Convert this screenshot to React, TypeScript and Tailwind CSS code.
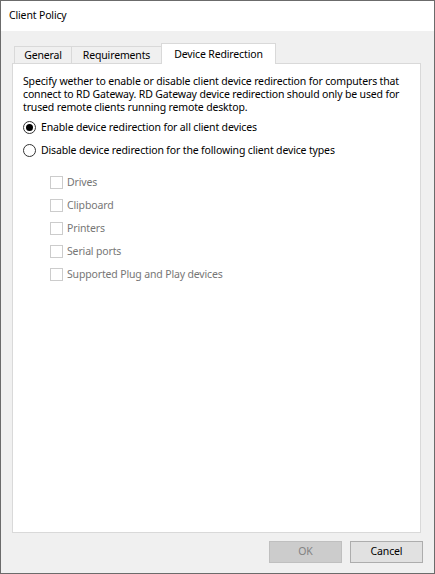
import React from "react";

const font = "font-['Noto_Sans',sans-serif]";

function Radio({ checked, label }: { checked?: boolean; label: string }) {
    return (
        <div className="h-[23px] flex items-center">
            <span className="w-[13px] h-[13px] rounded-full border border-[#333333] bg-white flex items-center justify-center">
                {checked && <span className="w-[7px] h-[7px] rounded-full bg-black" />}
            </span>
            <span className="ml-[5px] whitespace-nowrap">{label}</span>
        </div>
    )
}

function Check({ label }: { label: string }) {
    return (
        <div className="h-[23px] flex items-center">
            <span className="w-[13px] h-[13px] border border-[#cccccc] bg-white" />
            <span className="ml-[4px] whitespace-nowrap text-[#767676]">{label}</span>
        </div>
    )
}

export default function App() {
    const types = ["Drives", "Clipboard", "Printers", "Serial ports", "Supported Plug and Play devices"];

    return (
        <div className={`w-[435px] h-[574px] border border-[#6b6b6b] flex flex-col text-[10.5px] tracking-[-0.15px] text-black ${font}`}>
            <div className="h-[30px] bg-white flex items-center pl-[8px]">
                Client Policy
            </div>
            <div className="flex-1 bg-[#f0f0f0] flex flex-col">
                {/* tabs */}
                <div className="flex items-end pl-[13px] pt-[11px] h-[32px] leading-none">
                    <div className="w-[58px] h-[17px] border-l border-t border-r border-[#d9d9d9] flex items-center justify-center">
                        General
                    </div>
                    <div className="w-[89px] h-[17px] border-t border-[#d9d9d9] flex items-center justify-center">
                        Requirements
                    </div>
                    <div className="relative z-10 w-[115px] h-[21px] -mb-px bg-white border-l border-t border-r border-[#d9d9d9] flex items-center justify-center">
                        Device Redirection
                    </div>
                </div>
                <div className="ml-[11px] w-[409px] h-[470px] bg-white border border-[#d9d9d9] pt-[11px] pl-[10px]">
                    <p className="leading-[13px] whitespace-nowrap">
                        Specify wether to enable or disable client device redirection for computers that<br />
                        connect to RD Gateway. RD Gateway device redirection should only be used for<br />
                        trused remote clients running remote desktop.
                    </p>
                    <div className="mt-[2px]">
                        <Radio checked label="Enable device redirection for all client devices" />
                        <Radio label="Disable device redirection for the following client device types" />
                    </div>
                    <div className="mt-[9px] pl-[27px]">
                        {types.map((t) => (
                            <Check key={t} label={t} />
                        ))}
                    </div>
                </div>
                <div className="flex justify-end gap-[8px] pt-[8px] pr-[11px]">
                    <button className="w-[73px] h-[22px] bg-[#cccccc] border border-[#bfbfbf] text-[#838383]" disabled>
                        OK
                    </button>
                    <button className="w-[73px] h-[22px] bg-[#e1e1e1] border border-[#adadad]">
                        Cancel
                    </button>
                </div>
            </div>
        </div>
    )
}
